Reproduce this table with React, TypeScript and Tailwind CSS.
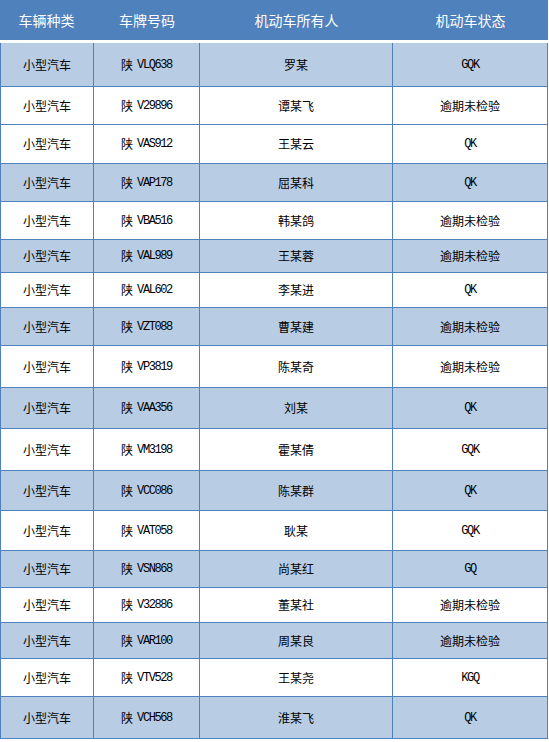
import React from "react";

type Row = { plate: string; owner: string; status: string; blue: boolean; h: string };

const rows: Row[] = [
  { plate: "VLQ638", owner: "罗某", status: "GQK", blue: true, h: "h-[44px]" },
  { plate: "V29896", owner: "谭某飞", status: "逾期未检验", blue: false, h: "h-[38px]" },
  { plate: "VAS912", owner: "王某云", status: "QK", blue: false, h: "h-[39px]" },
  { plate: "VAP178", owner: "屈某科", status: "QK", blue: true, h: "h-[38px]" },
  { plate: "VBA516", owner: "韩某鸽", status: "逾期未检验", blue: false, h: "h-[38px]" },
  { plate: "VAL989", owner: "王某蓉", status: "逾期未检验", blue: true, h: "h-[33px]" },
  { plate: "VAL602", owner: "李某进", status: "QK", blue: false, h: "h-[35px]" },
  { plate: "VZT088", owner: "曹某建", status: "逾期未检验", blue: true, h: "h-[38px]" },
  { plate: "VP3819", owner: "陈某奇", status: "逾期未检验", blue: false, h: "h-[42px]" },
  { plate: "VAA356", owner: "刘某", status: "QK", blue: true, h: "h-[41px]" },
  { plate: "VM3198", owner: "霍某倩", status: "GQK", blue: false, h: "h-[42px]" },
  { plate: "VCC086", owner: "陈某群", status: "QK", blue: true, h: "h-[40px]" },
  { plate: "VAT058", owner: "耿某", status: "GQK", blue: false, h: "h-[40px]" },
  { plate: "VSN868", owner: "尚某红", status: "GQ", blue: true, h: "h-[37px]" },
  { plate: "V32886", owner: "董某社", status: "逾期未检验", blue: false, h: "h-[35px]" },
  { plate: "VAR100", owner: "周某良", status: "逾期未检验", blue: true, h: "h-[36px]" },
  { plate: "VTV528", owner: "王某尧", status: "KGQ", blue: false, h: "h-[38px]" },
  { plate: "VCH568", owner: "淮某飞", status: "QK", blue: true, h: "h-[42px]" },
];

const isLatin = (s: string) => /^[A-Z0-9]+$/.test(s);

function Mono({ children }: { children: React.ReactNode }) {
  return (
    <span className="font-['Liberation_Mono',monospace] text-[12px] tracking-[-1.4px]">{children}</span>
  );
}

export default function App() {
  const cell = "flex items-center justify-center border-r border-b border-[#4f81bd]";
  return (
    <div className="w-[549px] h-[742px] bg-white font-['Noto_Sans_CJK_SC','Noto_Sans',sans-serif] text-black">
      <div className="w-[548px]">
        <div className="grid grid-cols-[94px_106px_193px_155px] h-[43px] bg-[#4f81bd] border-b-[3px] border-white text-white text-[14px]">
          <div className="flex items-center justify-center pr-[1px]">车辆种类</div>
          <div className="flex items-center justify-center">车牌号码</div>
          <div className="flex items-center justify-center">机动车所有人</div>
          <div className="flex items-center justify-center">机动车状态</div>
        </div>
        {rows.map((r, i) => (
          <div
            key={i}
            className={`grid grid-cols-[94px_106px_193px_155px] text-[12px] ${r.h} ${r.blue ? "bg-[#b8cce4]" : "bg-white"}`}
          >
            <div className={`${cell} border-l`}>小型汽车</div>
            <div className={cell}>
              <span>陕</span>
              <span className="w-[4px]" />
              <Mono>{r.plate}</Mono>
            </div>
            <div className={cell}>{r.owner}</div>
            <div className={cell}>{isLatin(r.status) ? <Mono>{r.status}</Mono> : r.status}</div>
          </div>
        ))}
      </div>
    </div>
  );
}
